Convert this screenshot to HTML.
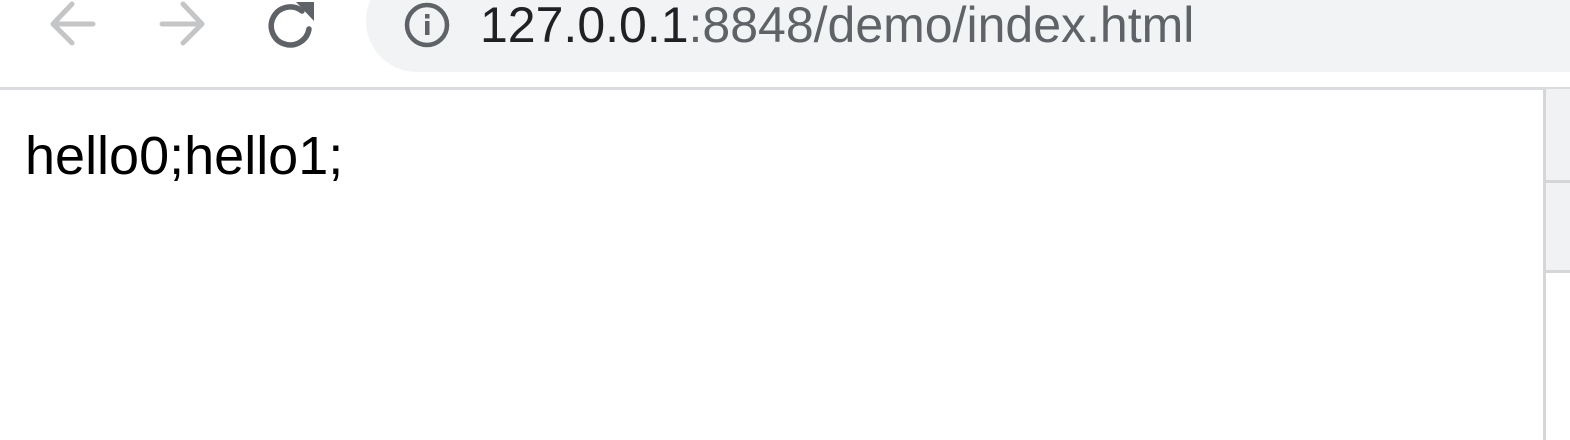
<!DOCTYPE html>
<html><head><style>
body{margin:0;width:1570px;height:440px;overflow:hidden;background:#fff;position:relative;font-family:"Liberation Sans",Arial,sans-serif}
.bar{position:absolute;left:0;top:0;width:1570px;height:87px;background:#fff;border-bottom:3px solid #dadce0}
.omni{position:absolute;left:366px;top:-30px;width:1260px;height:102px;border-radius:51px;background:#f1f3f4}
.url{position:absolute;left:480px;top:0px;font-size:50px;line-height:50px;color:#5f6368;white-space:nowrap}
.url b{font-weight:normal;color:#202124}
.txt{position:absolute;left:25px;top:124px;font-size:54px;line-height:64px;color:#000;white-space:nowrap}
.vl{position:absolute;left:1543px;top:89px;width:3px;height:351px;background:#d6d6d8}
.g1{position:absolute;left:1546px;top:89px;width:24px;height:91px;background:#f1f2f4;border-bottom:3px solid #d6d6d8}
.g2{position:absolute;left:1546px;top:183px;width:24px;height:87px;background:#f1f2f4;border-bottom:3px solid #d6d6d8}
</style></head><body>
<div class="bar">
<svg style="position:absolute;left:0;top:0" width="366" height="87">
<g fill="none" stroke-linecap="round" stroke-linejoin="round" stroke-width="5">
<path d="M53 24H93M72 4L53 24L72 43" stroke="#c4c5c7"/>
<path d="M162 24H202M183 4L202 24L183 43" stroke="#c4c5c7"/>
<path d="M309 29A19 19 0 1 1 302 11" stroke="#5f6368" stroke-width="5.5"/>
</g>
<path d="M296 2L314 2L314 21Z" fill="#5f6368"/>
</svg>
<div class="omni"></div>
<svg style="position:absolute;left:400px;top:0" width="50" height="50">
<circle cx="27" cy="25" r="20" fill="none" stroke="#5f6368" stroke-width="4.5"/>
<rect x="25" y="21" width="4.5" height="14" fill="#5f6368"/>
<rect x="25" y="14" width="4.5" height="4.5" fill="#5f6368"/>
</svg>
<div class="url"><b>127.0.0.1</b>:8848/demo/index.html</div>
</div>
<div class="txt">hello0;hello1;</div>
<div class="vl"></div><div class="g1"></div><div class="g2"></div>
</body></html>
